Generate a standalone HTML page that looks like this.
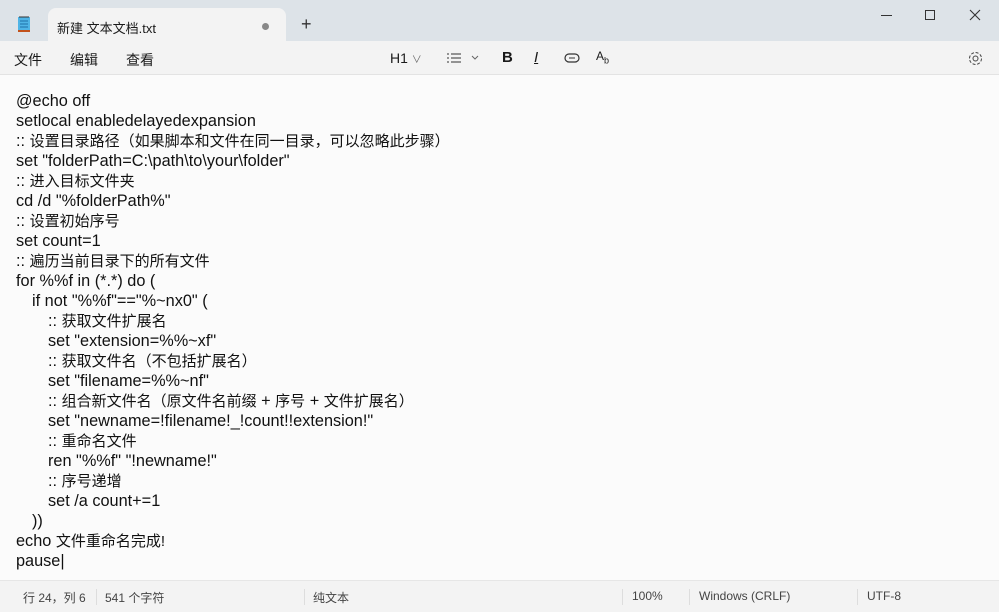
<!DOCTYPE html>
<html><head><meta charset="utf-8"><style>
*{margin:0;padding:0;box-sizing:border-box}
body{width:999px;height:612px;overflow:hidden;background:#fbfbfb;font-family:"Liberation Sans","Noto Sans CJK SC",sans-serif;color:#1a1a1a;position:relative}
.title{position:absolute;left:0;top:0;width:999px;height:41px;background:#dde3e8}
.tab{position:absolute;left:48px;top:8px;width:238px;height:33px;background:#f3f3f3;border-radius:8px 8px 0 0}
.menu{position:absolute;left:0;top:41px;width:999px;height:34px;background:#f3f3f3;border-bottom:1px solid #e3e3e3;font-size:14px}
.abs{position:absolute}
.editor{position:absolute;left:16px;top:91px;font-size:16.3px;line-height:20px;color:#111}
.editor i{font-style:normal;font-size:15px}
.editor div{height:20px;white-space:pre}
.s1{padding-left:16px}.s2{padding-left:32px}
.status{position:absolute;left:0;top:580px;width:999px;height:32px;background:#f3f3f3;border-top:1px solid #e6e6e6;font-size:12px;color:#444}
.sep{position:absolute;top:8px;width:1px;height:16px;background:#ddd}
</style></head><body>
<div class="title">
 <svg class="abs" style="left:17px;top:15px" width="14" height="18"><rect x="1" y="2" width="12" height="15" fill="#4fb4e6"/><rect x="1" y="15" width="12" height="2" fill="#c2521b"/><path d="M3 6h8M3 9h8M3 12h8" stroke="#1e6fa8" stroke-width="1"/><path d="M3 1v2M5 1v2M7 1v2M9 1v2M11 1v2" stroke="#333" stroke-width="1"/></svg>
 <div class="tab"></div>
 <div class="abs" style="left:57px;top:18px;font-size:13px">新建 文本文档.txt</div>
 <div class="abs" style="left:262px;top:23px;width:7px;height:7px;border-radius:50%;background:#888"></div>
 <div class="abs" style="left:301px;top:15px;font-size:18px;color:#333;line-height:18px">+</div>
 <div class="abs" style="left:881px;top:15px;width:11px;height:1px;background:#333"></div>
 <div class="abs" style="left:925px;top:10px;width:10px;height:10px;border:1px solid #333"></div>
 <svg class="abs" style="left:969px;top:9px" width="12" height="12"><path d="M1 1L11 11M11 1L1 11" stroke="#333" stroke-width="1.1"/></svg>
</div>
<div class="menu">
 <div class="abs" style="left:14px;top:9px">文件</div>
 <div class="abs" style="left:70px;top:9px">编辑</div>
 <div class="abs" style="left:126px;top:9px">查看</div>
 <div class="abs" style="left:390px;top:9px;font-size:14px">H1 <span style="font-size:10px;color:#666">&#x2228;</span></div>
 <svg class="abs" style="left:446px;top:11px" width="36" height="12"><path d="M1 2h2M1 6h2M1 10h2M5 2h10M5 6h10M5 10h10" stroke="#333"/><path d="M26 4l3 3 3-3" stroke="#666" fill="none"/></svg>
 <div class="abs" style="left:502px;top:8px;font-weight:bold;font-size:15px">B</div>
 <div class="abs" style="left:534px;top:8px;font-style:italic;font-size:15px;text-decoration:underline">I</div>
 <svg class="abs" style="left:564px;top:12px" width="16" height="10"><rect x="1" y="1" width="14" height="8" rx="4" fill="none" stroke="#333" stroke-width="1.2"/><path d="M5 5h6" stroke="#333"/></svg>
 <div class="abs" style="left:596px;top:8px;font-size:12px">A<sub style="font-size:9px">b</sub></div>
 <svg class="abs" style="left:967px;top:9px" width="17" height="17"><circle cx="8.5" cy="8.5" r="2.5" fill="none" stroke="#444"/><circle cx="8.5" cy="8.5" r="6" fill="none" stroke="#444" stroke-dasharray="3 1.7"/></svg>
</div>
<div class="editor"><div>@echo off</div><div>setlocal enabledelayedexpansion</div><div>:: <i>设置目录路径（如果脚本和文件在同一目录，可以忽略此步骤）</i></div><div>set "folderPath=C:\path\to\your\folder"</div><div>:: <i>进入目标文件夹</i></div><div>cd /d "%folderPath%"</div><div>:: <i>设置初始序号</i></div><div>set count=1</div><div>:: <i>遍历当前目录下的所有文件</i></div><div>for %%f in (*.*) do (</div><div class="s1">if not "%%f"=="%~nx0" (</div><div class="s2">:: <i>获取文件扩展名</i></div><div class="s2">set "extension=%%~xf"</div><div class="s2">:: <i>获取文件名（不包括扩展名）</i></div><div class="s2">set "filename=%%~nf"</div><div class="s2">:: <i>组合新文件名（原文件名前缀</i> + <i>序号</i> + <i>文件扩展名）</i></div><div class="s2">set "newname=!filename!_!count!!extension!"</div><div class="s2">:: <i>重命名文件</i></div><div class="s2">ren "%%f" "!newname!"</div><div class="s2">:: <i>序号递增</i></div><div class="s2">set /a count+=1</div><div class="s1">))</div><div>echo <i>文件重命名完成!</i></div><div>pause|</div></div>
<div class="status">
 <div class="abs" style="left:23px;top:8px">行 24，列 6</div>
 <div class="sep" style="left:96px"></div>
 <div class="abs" style="left:105px;top:8px">541 个字符</div>
 <div class="sep" style="left:304px"></div>
 <div class="abs" style="left:313px;top:8px">纯文本</div>
 <div class="sep" style="left:622px"></div>
 <div class="abs" style="left:632px;top:8px">100%</div>
 <div class="sep" style="left:689px"></div>
 <div class="abs" style="left:699px;top:8px">Windows (CRLF)</div>
 <div class="sep" style="left:857px"></div>
 <div class="abs" style="left:867px;top:8px">UTF-8</div>
</div>
</body></html>
